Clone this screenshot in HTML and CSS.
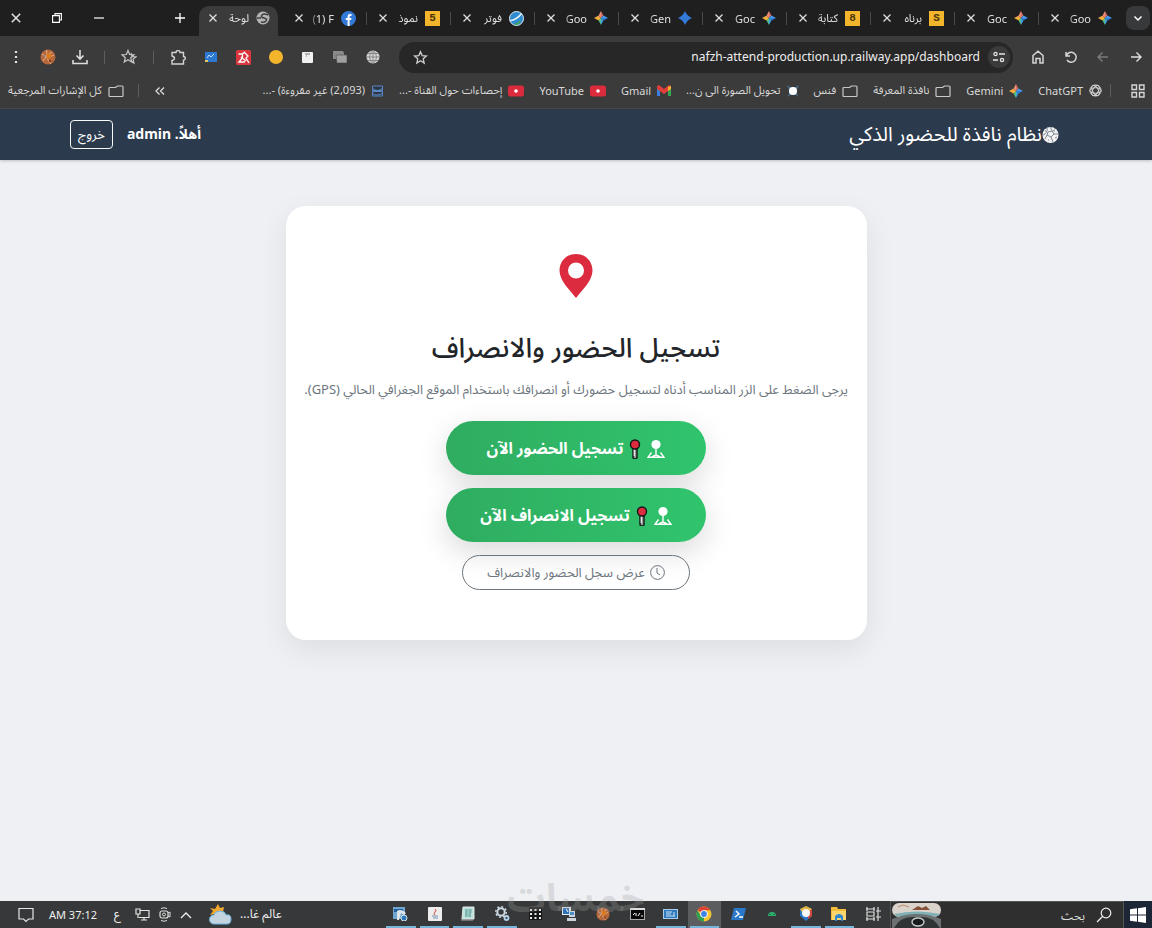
FILE: index.html
```html
<!DOCTYPE html>
<html lang="ar" dir="rtl">
<head>
    <meta charset="UTF-8">
    <meta name="viewport" content="width=device-width, initial-scale=1.0">
    <title>لوحة الحضور</title>
    <link rel="stylesheet" href="styles.css">
</head>
<body>

    <!-- shared icons -->
    <svg class="sprite" aria-hidden="true">
        <symbol id="close" viewBox="0 0 10 10"><path d="M1.5 1.5l7 7M8.5 1.5l-7 7" stroke="currentColor" stroke-width="1.3" fill="none"/></symbol>
        <symbol id="spark" viewBox="0 0 14 14">
            <path d="M7 0L4.6 4.6 7 7z" fill="#e88d78"/><path d="M7 0l2.4 4.6L7 7z" fill="#d96c62"/>
            <path d="M14 7L9.4 4.6 7 7z" fill="#4a9bea"/><path d="M14 7L9.4 9.4 7 7z" fill="#2f7de0"/>
            <path d="M7 14l2.4-4.6L7 7z" fill="#3f9de0"/><path d="M7 14L4.6 9.4 7 7z" fill="#4fc28a"/>
            <path d="M0 7l4.6 2.4L7 7z" fill="#f2b632"/><path d="M0 7l4.6-2.4L7 7z" fill="#f0a050"/>
        </symbol>
        <symbol id="folder" viewBox="0 0 16 12"><path d="M1 3.5a1 1 0 0 1 1-1h5.5L9.500 1H14a1 1 0 0 1 1 1v8.500a1 1 0 0 1-1 1H2a1 1 0 0 1-1-1z" fill="none" stroke="#c9c9c9" stroke-width="1.2"/></symbol>
        <symbol id="tube" viewBox="0 0 16 12"><rect y=".5" width="16" height="11" rx="2.500" fill="#dc2b3d"/><circle cx="8" cy="6" r="1.800" fill="#fff"/></symbol>
        <symbol id="star" viewBox="0 0 16 16"><path d="M8 1.800l1.800 4.200 4.500.4-3.400 3 1 4.500L8 11.500l-3.900 2.400 1-4.500-3.400-3 4.500-.4z" fill="none" stroke="#cfcfcf" stroke-width="1.400"/></symbol>
        <symbol id="ball" viewBox="0 0 16 16"><circle cx="8" cy="8" r="7.500" fill="#b5683b"/><path d="M2 5q6 5 12 1M3 12q4-7 9-9M7 1q-2 8 4 14" stroke="#e6b38a" fill="none"/><path d="M6 5l3-1 3 2-1 3-4 1z" fill="#dc7a20"/><circle cx="4.500" cy="7" r="1" fill="#7f86a8"/><circle cx="10" cy="12" r="1.200" fill="#8d3620"/></symbol>
        <symbol id="check-in" viewBox="0 0 18 20"><circle cx="9" cy="5.500" r="4.600" fill="#fff"/><path d="M9 9v7.500M4.500 13.500L1 18.300h16l-3.500-4.800M5 18q4-3.500 8 0" stroke="#fff" stroke-width="1.400" fill="none"/></symbol>
        <symbol id="pushpin" viewBox="0 0 12 20"><path d="M4 9.500v8.500a2 2 0 0 0 4 0V9.500z" fill="#999" stroke="#15201a" stroke-width="1.500"/><path d="M5.300 10v7" stroke="#f0eeee" stroke-width="1.200"/><circle cx="6" cy="5.500" r="4.500" fill="#dc2b3d" stroke="#151518" stroke-width="1.400"/></symbol>
    </svg>

    <nav class="tab-strip">
        <button class="tab-search" aria-label="البحث في علامات التبويب"><svg width="10" height="10" viewBox="0 0 10 10"><path d="M1.500 3.500L5 7l3.500-3.500" stroke="#fff" stroke-width="1.500" fill="none"/></svg></button>
        <div class="tabs">
            <div class="tab"><svg width="14" height="14"><use href="#spark"/></svg><span dir="auto">Goo</span><button aria-label="إغلاق"><svg width="10" height="10"><use href="#close"/></svg></button></div>
            <div class="tab"><svg width="14" height="14"><use href="#spark"/></svg><span dir="auto">Goc</span><button aria-label="إغلاق"><svg width="10" height="10"><use href="#close"/></svg></button></div>
            <div class="tab"><i class="badge">S</i><span dir="auto">برناه</span><button aria-label="إغلاق"><svg width="10" height="10"><use href="#close"/></svg></button></div>
            <div class="tab"><i class="badge">8</i><span dir="auto">كتابة</span><button aria-label="إغلاق"><svg width="10" height="10"><use href="#close"/></svg></button></div>
            <div class="tab"><svg width="14" height="14"><use href="#spark"/></svg><span dir="auto">Goc</span><button aria-label="إغلاق"><svg width="10" height="10"><use href="#close"/></svg></button></div>
            <div class="tab"><svg width="14" height="14" viewBox="0 0 14 14"><path d="M7 0q2 5 7 7-5 2-7 7-2-5-7-7 5-2 7-7z" fill="#3279d8"/></svg><span dir="auto">Gen</span><button aria-label="إغلاق"><svg width="10" height="10"><use href="#close"/></svg></button></div>
            <div class="tab"><svg width="14" height="14"><use href="#spark"/></svg><span dir="auto">Goo</span><button aria-label="إغلاق"><svg width="10" height="10"><use href="#close"/></svg></button></div>
            <div class="tab"><svg width="15" height="15" viewBox="0 0 15 15"><circle cx="7.500" cy="7.500" r="7" fill="#2f8ad0" stroke="#dceaf4"/><path d="M1 9Q7 8 12 2l1 1Q9 9 1.500 10.500z" fill="#e8f3fa"/><path d="M5 13q4-1 7-4-1 5-6 5z" fill="#45a84c"/></svg><span dir="auto">فوتر</span><button aria-label="إغلاق"><svg width="10" height="10"><use href="#close"/></svg></button></div>
            <div class="tab"><i class="badge">5</i><span dir="auto">نموذ</span><button aria-label="إغلاق"><svg width="10" height="10"><use href="#close"/></svg></button></div>
            <div class="tab"><svg width="15" height="15" viewBox="0 0 15 15"><circle cx="7.500" cy="7.500" r="7.500" fill="#3279d8"/><path d="M6.600 15V9H4.800V6.900h1.800V5.400Q6.600 3 9 3h1.500v2H9.400q-.8 0-.8.8v1.100h1.900L10.200 9H8.600v6z" fill="#fff"/></svg><span dir="ltr">(1) F</span><button aria-label="إغلاق"><svg width="10" height="10"><use href="#close"/></svg></button></div>
            <div class="tab active"><svg width="14" height="14" viewBox="0 0 14 14"><circle cx="7" cy="7" r="6.500" fill="#b4b4b4"/><path d="M12 4Q8 2 6 4T8 7q4 1 2 3t-5 1M1 7h4" stroke="#404040" stroke-width="1.500" fill="none"/></svg><span dir="auto">لوحة</span><button aria-label="إغلاق"><svg width="10" height="10"><use href="#close"/></svg></button></div>
        </div>
        <div class="window-controls">
            <button class="new-tab" aria-label="علامة تبويب جديدة"><svg width="10" height="10" viewBox="0 0 10 10"><path d="M5 0v10M0 5h10" stroke="#fff" stroke-width="1.300"/></svg></button>
            <button aria-label="تصغير"><svg width="10" height="10" viewBox="0 0 10 10"><path d="M0 5h10" stroke="#fff" stroke-width="1.200"/></svg></button>
            <button aria-label="استعادة"><svg width="10" height="10" viewBox="0 0 10 10"><path d="M.6 2.600h6.800v6.800H.6zM3 2.500V.6h6.400v6.400H7.500" stroke="#fff" stroke-width="1.100" fill="none"/></svg></button>
            <button aria-label="إغلاق النافذة"><svg width="12" height="12"><use href="#close"/></svg></button>
        </div>
    </nav>

    <div class="toolbar">
        <div class="history">
            <button aria-label="التالي"><svg width="12" height="12" viewBox="0 0 12 12"><path d="M1 6h10M6.500 1.500L11 6l-4.500 4.500" stroke="#e0e0e0" stroke-width="1.400" fill="none"/></svg></button>
            <button aria-label="السابق"><svg width="12" height="12" viewBox="0 0 12 12"><path d="M11 6H1M5.500 1.500L1 6l4.500 4.500" stroke="#7b7b7b" stroke-width="1.400" fill="none"/></svg></button>
            <button aria-label="إعادة التحميل"><svg width="14" height="14" viewBox="0 0 14 14"><path d="M2 2v4h4M2.500 5.500A5 5 0 1 1 3 10" stroke="#d6d6d6" stroke-width="1.500" fill="none"/></svg></button>
            <button aria-label="الصفحة الرئيسية"><svg width="14" height="14" viewBox="0 0 14 14"><path d="M2 5.500L7 1.200l5 4.300V13H9V8.500H5V13H2z" stroke="#d6d6d6" stroke-width="1.500" fill="none"/></svg></button>
        </div>
        <div class="omnibox">
            <button class="site-info" aria-label="معلومات الموقع"><svg width="12" height="12" viewBox="0 0 12 12"><path d="M6 3h6M0 9h5" stroke="#e6e6e6" stroke-width="1.500"/><circle cx="2.500" cy="3" r="1.600" stroke="#e6e6e6" stroke-width="1.300" fill="none"/><circle cx="9" cy="9" r="1.600" stroke="#e6e6e6" stroke-width="1.300" fill="none"/></svg></button>
            <input type="text" dir="ltr" aria-label="العنوان" value="nafzh-attend-production.up.railway.app/dashboard">
            <button aria-label="إضافة إلى الإشارات"><svg width="15" height="15"><use href="#star"/></svg></button>
        </div>
        <div class="extensions">
            <button aria-label="الترجمة"><svg width="14" height="14" viewBox="0 0 14 14"><circle cx="7" cy="7" r="6.500" fill="#d6d6d6"/><path d="M7 0v14M0 7h14M2 3.500h10M2 10.500h10M7 0Q0 7 7 14M7 0q7 7 0 14" stroke="#777" stroke-width=".8" fill="none"/></svg></button>
            <button aria-label="لقطات"><svg width="14" height="12" viewBox="0 0 14 12"><path d="M0 0h10l1 2v6H0z" fill="#8b8b8b"/><path d="M3 4h11v8H4z" fill="#a0a0a0" stroke="#555" stroke-width=".7"/></svg></button>
            <button aria-label="ملاحظات"><svg width="11" height="11" viewBox="0 0 11 11"><rect width="11" height="11" rx="1" fill="#f1f1f1"/><path d="M3 2h5M4 4h1" stroke="#777"/></svg></button>
            <button aria-label="تنبيه"><svg width="14" height="14" viewBox="0 0 14 14"><circle cx="7" cy="7" r="7" fill="#f2b52c"/></svg></button>
            <button aria-label="مدقق"><svg width="15" height="15" viewBox="0 0 15 15"><rect width="15" height="15" rx="1.500" fill="#d9363e"/><path d="M2.500 4h4l2-2M8 2l4 4-2 2 3 5M6 4q2 3-3 8h6M5 7l5 4" fill="none" stroke="#fff" stroke-width="1.300"/></svg></button>
            <button aria-label="بريد"><svg width="12" height="10" viewBox="0 0 12 10"><rect width="12" height="10" fill="#2d78d2"/><path d="M2 6l2-3 2 2 3-3" stroke="#bfe3ff" fill="none"/><path d="M0 8h3v2H0z" fill="#e0c860"/></svg></button>
            <button aria-label="الإضافات"><svg width="15" height="15" viewBox="0 0 15 15"><path d="M1 2.500h4a2 2 0 0 1 4 0h3.500v4a1.800 1.800 0 0 1 0 3.600V14H1v-3.500q2.500-.5 2.500-2.200T1 6z" fill="none" stroke="#d4d4d4" stroke-width="1.400"/></svg></button>
        </div>
        <span class="rule"></span>
        <button class="tool" aria-label="المفضلة"><svg width="16" height="16" viewBox="0 0 16 16"><path d="M7 1.500l1.600 4 4.400.3-3.300 2.900 1 4.300L7 10.800l-3.700 2.200 1-4.300L1 5.800l4.400-.3zM10 4l1 3.500 4 .3-3 2.500 1 3.700-3-2" fill="none" stroke="#c8c8c8" stroke-width="1.200"/></svg></button>
        <span class="rule"></span>
        <button class="tool" aria-label="التنزيلات"><svg width="16" height="16" viewBox="0 0 16 16"><path d="M8 1v9M4.500 6.500L8 10l3.500-3.500M1 11v3.500h14V11" stroke="#ddd" stroke-width="1.600" fill="none"/></svg></button>
        <button class="tool" aria-label="الملف الشخصي"><svg width="16" height="16"><use href="#ball"/></svg></button>
        <button class="tool" aria-label="القائمة"><svg width="4" height="14" viewBox="0 0 4 14"><path d="M2 1v2M2 6v2M2 11v2" stroke="#e2e2e2" stroke-width="2.200"/></svg></button>
    </div>

    <div class="bookmarks">
        <button class="apps" aria-label="التطبيقات"><svg width="14" height="14" viewBox="0 0 14 14"><path d="M1 1h4.500v4.500H1zM8.500 1H13v4.500H8.500zM1 8.500h4.500V13H1zM8.500 8.500H13V13H8.500z" fill="none" stroke="#d6d6d6" stroke-width="1.400"/></svg></button>
        <span class="rule"></span>
        <a href="#"><svg width="13" height="13" viewBox="0 0 14 14"><g fill="none" stroke="#d8d8d8"><circle cx="7" cy="7" r="6"/><ellipse cx="7" cy="7" rx="6" ry="3"/><ellipse cx="7" cy="7" rx="6" ry="3" transform="rotate(60 7 7)"/><ellipse cx="7" cy="7" rx="6" ry="3" transform="rotate(120 7 7)"/></g></svg><span>ChatGPT</span></a>
        <a href="#"><svg width="14" height="14"><use href="#spark"/></svg><span>Gemini</span></a>
        <a href="#"><svg width="16" height="12"><use href="#folder"/></svg><span>نافذة المعرفة</span></a>
        <a href="#"><svg width="16" height="12"><use href="#folder"/></svg><span>فنس</span></a>
        <a href="#"><svg width="12" height="12" viewBox="0 0 12 12"><path d="M0 0l3 2h6l3-2-2 4v5l2 3-3-2H3l-3 2 2-3V4z" fill="#4f7390"/><circle cx="6" cy="6" r="4" fill="#fff"/></svg><span>تحويل الصورة الى ن...</span></a>
        <a href="#"><svg width="14" height="11" viewBox="0 0 14 11"><path d="M0 1h3v10H0z" fill="#3d7fe0"/><path d="M11 1h3v10h-3z" fill="#34a853"/><path d="M0 1l2-1 5 4 5-4 2 1v3L7 9 0 4z" fill="#df3f38"/><path d="M11 2l3-1v3l-3 2z" fill="#f4b52c"/></svg><span>Gmail</span></a>
        <a href="#"><svg width="16" height="12"><use href="#tube"/></svg><span>YouTube</span></a>
        <a href="#"><svg width="16" height="12"><use href="#tube"/></svg><span>إحصاءات حول القناة -...</span></a>
        <a href="#"><svg width="13" height="12" viewBox="0 0 13 12"><path d="M1.500 1h10v4.500h-10zM1.500 6.500h10V11h-10z" fill="#2b3543" stroke="#5b86c4"/><path d="M1 3q5 5 11 0M1 8q5 4 11 0" stroke="#5b86c4" fill="none"/></svg><span>(2,093) غير مقروءة) -...</span></a>
        <button class="more" aria-label="المزيد"><svg width="10" height="8" viewBox="0 0 10 8"><path d="M4.500.5L1 4l3.500 3.500M9 .5L5.500 4 9 7.500" stroke="#ddd" stroke-width="1.300" fill="none"/></svg></button>
        <span class="rule"></span>
        <a href="#" class="all"><svg width="16" height="12"><use href="#folder"/></svg><span>كل الإشارات المرجعية</span></a>
    </div>

    <header class="navbar">
        <a href="#" class="brand"><svg width="17" height="18" viewBox="0 0 17 18"><circle cx="8.500" cy="9" r="8" fill="#f2f2f2"/><path d="M5 2q1 5-4 7M9 1q-1 4 4 4M6 6l4-1 2 3-3 3-4-2zM12 8h4M9 11l2 5M5 9l-2 4M13 12l2-1M6 14h1M3 5h1M12 3h1" stroke="#7d8792" stroke-width="1" fill="none"/></svg>نظام نافذة للحضور الذكي</a>
        <div class="user">
            <strong>أهلاً. admin</strong>
            <button class="logout">خروج</button>
        </div>
    </header>

    <main>
        <section class="card">
            <svg class="pin" width="34" height="44" viewBox="0 0 34 44"><path d="M17 0C7 0 .5 7.500.5 16.500.5 27 11 36 17 44c6-8 16.500-17 16.500-27.500C33.500 7.500 27 0 17 0zm0 8.500a8 8 0 1 1 0 16 8 8 0 0 1 0-16z" fill="#dc2b3f"/></svg>
            <h1>تسجيل الحضور والانصراف</h1>
            <p>يرجى الضغط على الزر المناسب أدناه لتسجيل حضورك أو انصرافك باستخدام الموقع الجغرافي الحالي (GPS).</p>
            <button class="action"><svg width="18" height="20"><use href="#check-in"/></svg><svg width="12" height="20"><use href="#pushpin"/></svg>تسجيل الحضور الآن</button>
            <button class="action"><svg width="18" height="20"><use href="#check-in"/></svg><svg width="12" height="20"><use href="#pushpin"/></svg>تسجيل الانصراف الآن</button>
            <button class="log"><svg width="15" height="15" viewBox="0 0 15 15"><circle cx="7.500" cy="7.500" r="6.900" fill="none" stroke="#6c757d"/><path d="M7 3v5l3 2" fill="none" stroke="#6c757d"/></svg>عرض سجل الحضور والانصراف</button>
        </section>
    </main>

    <footer class="taskbar">
        <button class="start" aria-label="ابدأ"><svg width="16" height="16" viewBox="0 0 16 16"><path d="M0 2.300L7 1.300v6.200H0zM8 1.200L16 0v7.500H8zM0 8.500h7v6.200l-7-1zM8 8.500h8V16l-8-1.200z" fill="#fff"/></svg></button>
        <label class="search">
            <svg width="16" height="16" viewBox="0 0 16 16"><circle cx="10" cy="6" r="4.800" fill="none" stroke="#eee" stroke-width="1.200"/><path d="M6.500 9.500L1 15" stroke="#eee" stroke-width="1.300"/></svg>
            <input type="text" placeholder="بحث" aria-label="بحث">
            <svg width="50" height="26" viewBox="0 0 50 26"><rect width="49" height="14" y="1" rx="7" fill="#d9d3cc"/><path d="M20 8l6-4 4 2 4-2 4 4z" fill="#875039"/><path d="M6 5l5-2 6 2" stroke="#c18a6a" fill="none"/><path d="M2 12q23-5 46 0l-2 2H4z" fill="#7fb0b4"/><path d="M0 26v-9q25-10 49 0v9z" fill="#6b7072"/><path d="M2 26Q8 15 20 15h10q12 0 18 11z" fill="#303334"/><ellipse cx="26" cy="20" rx="6" ry="4" fill="#17191a" stroke="#c5cccd" stroke-width="1.400"/></svg>
        </label>
        <div class="apps-row">
            <button aria-label="عرض المهام"><svg width="16" height="16" viewBox="0 0 16 16"><path d="M1 3h9M1 13h9M2 6h7v4H2zM13 1v14M11 5h5M11 11h5M2 1v4M9 1v4M2 11v4M9 11v4" stroke="#ddd" stroke-width="1.200" fill="none"/></svg></button>
            <button class="open" aria-label="الملفات"><svg width="16" height="14" viewBox="0 0 16 14"><path d="M0 0h6l1 2h8v11H0z" fill="#f5bb3a"/><path d="M1 4h14v9H1z" fill="#fbd66e"/><path d="M4 14V9q4-4 8 0v5h-2v-3H6v3z" fill="#2e87d0"/></svg></button>
            <button class="open" aria-label="الحماية"><svg width="14" height="15" viewBox="0 0 14 15"><path d="M1 3l6-3 6 3v7l-6 5-6-5z" fill="#2c75c4"/><path d="M1 3l6-3 6 3-2 3H3z" fill="#e4b33b"/><path d="M13 3v7l-4 3V6z" fill="#d4453a"/><circle cx="7" cy="7" r="4" fill="#f7f7f7"/></svg></button>
            <button aria-label="أندرويد"><svg width="10" height="6" viewBox="0 0 10 6"><path d="M1 5q0-4 4-4t4 4z" fill="#2eb070"/><path d="M3 3v1M7 3v1" stroke="#203b2c"/></svg></button>
            <button aria-label="الطرفية"><svg width="15" height="12" viewBox="0 0 15 12"><path d="M3 0h12l-3 12H0z" fill="#2b78c9"/><path d="M5 3l3 3-4 3M8 9h4" stroke="#fff" stroke-width="1.400" fill="none"/></svg></button>
            <button class="open current" aria-label="كروم"><svg width="16" height="16" viewBox="0 0 16 16"><circle cx="8" cy="8" r="7.500" fill="#f4c435"/><path d="M8 8L1.500 4.200A7.500 7.500 0 0 1 14.500 4.200H8z" fill="#dd4437"/><path d="M8 8v7.500A7.500 7.500 0 0 1 1.500 4.200l3.300 5.600z" fill="#2f9e55"/><circle cx="8" cy="8" r="3.800" fill="#fff"/><circle cx="8" cy="8" r="2.900" fill="#3d82e8"/></svg></button>
            <button class="open" aria-label="لوحة المفاتيح"><svg width="15" height="10" viewBox="0 0 15 10"><rect x=".5" y=".5" width="14" height="9" fill="#2e78bd" stroke="#a9cceb"/><path d="M3 3h6M3 5h5M11 3v4M3 7h9" stroke="#cbe4f7"/></svg></button>
            <button aria-label="موجه الأوامر"><svg width="15" height="12" viewBox="0 0 15 12"><rect x=".5" y=".5" width="14" height="11" fill="#090909" stroke="#aaa"/><path d="M0 1h15" stroke="#ddd" stroke-width="2"/><path d="M3 7l2-2M6 8V5M8 8l2-3M11 8h2" stroke="#fff"/></svg></button>
            <button aria-label="كرة"><svg width="14" height="14"><use href="#ball"/></svg></button>
            <button aria-label="الشبكة"><svg width="15" height="14" viewBox="0 0 15 14"><rect width="9" height="8" fill="#e7edf2"/><path d="M1 1h6v6H1z" fill="#2d72b8"/><path d="M7 4h6v6H7zM5 11h9v3H5z" fill="#ccd5dc"/><path d="M8 5h4v3H8z" fill="#4c8fca"/><path d="M4 2l2 3" stroke="#fff"/></svg></button>
            <button aria-label="الحاسبة"><svg width="13" height="13" viewBox="0 0 13 13"><rect width="13" height="13" fill="#161616"/><path d="M1 3h11M1 7h11M1 11h11" stroke="#e8e8e8" stroke-width="2" stroke-dasharray="2 2.500"/></svg></button>
            <button class="open" aria-label="الإعدادات"><svg width="15" height="15" viewBox="0 0 15 15"><circle cx="6" cy="6" r="3.700" fill="none" stroke="#cfdbe4" stroke-width="2"/><circle cx="6" cy="6" r="5.300" fill="none" stroke="#cfdbe4" stroke-width="1.400" stroke-dasharray="2 2.100"/><circle cx="11.500" cy="12" r="2" fill="none" stroke="#b3d2ea" stroke-width="1.800"/></svg></button>
            <button class="open" aria-label="المفكرة"><svg width="14" height="15" viewBox="0 0 14 15"><path d="M2 1h11v12H1z" fill="#bfe2dc" stroke="#dce8e6"/><path d="M4 4h7M4 6h7M4 8h6M4 10h6M5 3v8M9 3v8" stroke="#67aaa2"/><path d="M0 14h12" stroke="#aaa"/></svg></button>
            <button class="open" aria-label="جافا"><svg width="14" height="14" viewBox="0 0 14 14"><rect width="14" height="14" rx="1" fill="#ededed"/><path d="M7 2q2 1 0 3t0 3" stroke="#d4453a" fill="none"/><path d="M4 9h6M5 11h5" stroke="#7493b1"/></svg></button>
            <button class="open" aria-label="الأدوات"><svg width="15" height="14" viewBox="0 0 15 14"><path d="M0 0h12v12H0z" fill="#6fa5cf"/><path d="M1 2h9v3H1z" fill="#235f9b"/><path d="M4 4q4-3 9 2l-2 2-3-2-2 7H4z" fill="#dce5eb"/><circle cx="11" cy="11" r="3" fill="#2e77ba" stroke="#dce5eb"/></svg></button>
        </div>
        <div class="tray">
            <button class="weather"><span>عالم غا...</span><svg width="23" height="22" viewBox="0 0 23 22"><path d="M9 0l2 4 4-1-1 5-8 5-1-3-4 1 3-4-3-3 5 1z" fill="#f2a92f"/><path d="M5 20a4.500 4.500 0 0 1 0-9q1-4 6-4t6 4q5-1 5 4t-4 5z" fill="#c3d3df" stroke="#6db6e2"/></svg></button>
            <button aria-label="إظهار الرموز"><svg width="12" height="8" viewBox="0 0 12 8"><path d="M1 7l5-5 5 5" stroke="#eee" stroke-width="1.300" fill="none"/></svg></button>
            <button aria-label="الكاميرا"><svg width="12" height="15" viewBox="0 0 12 15"><rect x="1" y="4" width="8" height="7" rx="2" fill="none" stroke="#ddd" stroke-width="1.200"/><circle cx="5" cy="7.500" r="1.500" fill="none" stroke="#ddd"/><path d="M9 6l2-1v5L9 9M2 1.500q3-1.500 6 0M2 13.500q3 1.500 6 0" stroke="#ddd" fill="none"/></svg></button>
            <button aria-label="الشبكة"><svg width="15" height="13" viewBox="0 0 15 13"><path d="M4 2.500h10v7H4M9 10v2M6 12h6" stroke="#e6e6e6" stroke-width="1.200" fill="none"/><path d="M1 1h4v5H1zM3 6v4" stroke="#e6e6e6" stroke-width="1.200" fill="#333"/></svg></button>
            <button class="lang">ع</button>
            <time dir="ltr">AM 37:12</time>
            <button aria-label="الإشعارات"><svg width="16" height="16" viewBox="0 0 16 16"><path d="M1 1.500h14v10.500H10.500L8 14.500 5.500 12H1z" stroke="#e6e6e6" stroke-width="1.200" fill="none"/></svg></button>
        </div>
    </footer>

    <div class="watermark">خمسات</div>

</body>
</html>
```
FILE: styles.css
```css
* {
    box-sizing: border-box;
}

body {
    font-family: "Noto Sans", "Noto Sans Arabic", "DejaVu Sans", sans-serif;
    background-color: #eef0f4;
    color: #212529;
    margin: 0;
    min-height: 100vh;
    display: flex;
    flex-direction: column;
    position: relative;
}

button {
    font-family: inherit;
    background: none;
    border: none;
    color: inherit;
    padding: 0;
    display: flex;
    align-items: center;
    justify-content: center;
    cursor: pointer;
}

svg {
    flex-shrink: 0;
}

a {
    color: inherit;
    text-decoration: none;
}

.sprite {
    display: none;
}

/* browser tabs */
.tab-strip {
    display: flex;
    height: 36px;
    background-color: #1f1f1f;
    color: #e0e0e0;
    padding-right: 2px;
}

.tab-search {
    width: 24px;
    height: 24px;
    margin: 6px 0 0 4px;
    border-radius: 8px;
    background-color: #38393a;
    flex-shrink: 0;
}

.tabs {
    flex: 1;
    min-width: 0;
    display: flex;
}

.tab {
    flex: 1 1 0;
    min-width: 0;
    display: flex;
    align-items: center;
    padding: 0 10px 0 12px;
    position: relative;
    font-size: 11px;
    white-space: nowrap;
}

.tab span {
    width: 26px;
    margin: 0 7px 0 6px;
    overflow: hidden;
    text-align: right;
    mask-image: linear-gradient(to left, #000 70%, transparent);
}

.tab::after {
    content: "";
    position: absolute;
    left: 0;
    top: 12px;
    height: 13px;
    border-left: 1px solid #4a4a4a;
}

.tab.active::after,
.tab:nth-last-child(2)::after {
    display: none;
}

.tab.active {
    background-color: #3b3b3b;
    margin: 6px 4px 0 5px;
    padding: 0 8px 6px 9px;
    border-radius: 10px 10px 0 0;
}

.badge {
    width: 15px;
    height: 15px;
    background-color: #f2b52c;
    color: #4b3509;
    font: bold 11px/15px "Liberation Mono", monospace;
    text-align: center;
    flex-shrink: 0;
}

.window-controls {
    width: 194px;
    display: flex;
    flex-shrink: 0;
}

.window-controls button {
    width: 42px;
}

.window-controls .new-tab {
    width: 28px;
    margin-left: 46px;
}

.window-controls button:last-child {
    width: 36px;
    padding-right: 4px;
}

/* address bar */
.toolbar {
    display: flex;
    align-items: center;
    height: 42px;
    background-color: #3b3b3b;
}

.history {
    display: flex;
    width: 130px;
}

.history button,
.extensions button {
    flex: 1;
    height: 32px;
}

.omnibox {
    flex: 1;
    display: flex;
    align-items: center;
    height: 31px;
    margin: 0 9px 0 10px;
    padding: 0 3px 0 14px;
    border-radius: 16px;
    background-color: #272727;
}

.omnibox input {
    flex: 1;
    min-width: 0;
    border: none;
    background: none;
    color: #eee;
    font: 12px/20px "Noto Sans", sans-serif;
    text-align: right;
    padding: 0 8px;
}

.site-info {
    width: 22px;
    height: 22px;
    border-radius: 50%;
    background-color: #3b3b3b;
}

.extensions {
    display: flex;
    width: 227px;
}

.tool {
    width: 32px;
    height: 32px;
}

.rule {
    width: 1px;
    height: 13px;
    margin: 0 8px;
    background-color: #5e5e5e;
}

/* bookmarks */
.bookmarks {
    display: flex;
    align-items: center;
    height: 31px;
    padding: 0 7px 5px 8px;
    background-color: #3b3b3b;
    border-bottom: 1px solid #4a4a4a;
    color: #d8d8d8;
    font-size: 11px;
    white-space: nowrap;
}

.bookmarks a {
    display: flex;
    align-items: center;
    gap: 6px;
    margin-left: 15px;
}

.apps {
    margin-left: 12px;
}

.bookmarks .more {
    margin-right: auto;
    margin-left: 8px;
}

.bookmarks .all {
    margin: 0 6px 0 0;
}

/* site header */
.navbar {
    display: flex;
    align-items: center;
    justify-content: space-between;
    height: 51px;
    padding: 0 93px 0 70px;
    background-color: #2b3a4c;
    color: #fff;
    box-shadow: 0 1px 3px rgba(0, 0, 0, 0.2);
}

.brand {
    display: flex;
    align-items: center;
    font-size: 20px;
}

.user {
    display: flex;
    align-items: center;
    gap: 14px;
    font-size: 14px;
}

.logout {
    height: 29px;
    padding: 0 7px;
    border: 1px solid #f8f9fa;
    border-radius: 4px;
    font-size: 13px;
}

main {
    flex: 1;
    padding: 46px 20px;
}

.card {
    display: flex;
    flex-direction: column;
    align-items: center;
    max-width: 581px;
    margin: 0 auto;
    padding: 48px 16px 50px;
    border-radius: 20px;
    background-color: #fff;
    box-shadow: 0 10px 30px rgba(0, 0, 0, 0.08);
}

.card h1 {
    margin: 28px 0 0;
    font-size: 27px;
    font-weight: 500;
    line-height: 42px;
    white-space: nowrap;
}

.card p {
    margin: 10px 0 20px;
    color: #6c757d;
    font-size: 13px;
    line-height: 23px;
}

.action {
    gap: 6px;
    width: 260px;
    height: 54px;
    margin-bottom: 13px;
    padding-top: 2px;
    border-radius: 27px;
    background: linear-gradient(90deg, #2fac60, #30c46d);
    box-shadow: 0 10px 30px rgba(0, 0, 0, 0.15);
    color: #fff;
    font-size: 16px;
    font-weight: bold;
}

.log {
    gap: 5px;
    width: 228px;
    height: 35px;
    border: 1px solid #6c757d;
    border-radius: 18px;
    color: #6c757d;
    font-size: 13px;
}

/* windows taskbar */
.taskbar {
    display: flex;
    height: 27px;
    background-color: #373839;
    color: #f0f0f0;
    font-size: 12px;
}

.start {
    width: 28px;
    background-color: #1c2636;
}

.search {
    display: flex;
    align-items: center;
    width: 234px;
    padding: 0 11px 0 1px;
    border: 1px solid #555;
    border-bottom-width: 0;
    background-color: #2f2f2f;
}

.search input {
    flex: 1;
    min-width: 0;
    border: none;
    background: none;
    font: 12px "Noto Sans", "Noto Sans Arabic", "DejaVu Sans", sans-serif;
    color: #ddd;
    padding: 0 11px;
}

.search input::placeholder {
    color: #ddd;
}

.apps-row {
    display: flex;
    width: 506px;
}

.apps-row button {
    flex: 1;
    border-bottom: 2px solid transparent;
}

.apps-row .open {
    border-image: linear-gradient(90deg, transparent 12%, #76b5dc 12%, #76b5dc 88%, transparent 88%) 2;
}

.apps-row .current {
    background-color: #5b5d5f;
}

.tray {
    flex: 1;
    display: flex;
    align-items: center;
    justify-content: flex-end;
    gap: 9px;
    padding-left: 18px;
}

.weather {
    gap: 8px;
    margin-left: 8px;
    font-size: 12px;
}

.lang {
    width: 14px;
    margin: 0 2px 0 4px;
    font-size: 12px;
}

.tray time {
    font-size: 11px;
    margin-left: 6px;
}

.watermark {
    position: absolute;
    left: 507px;
    bottom: 12px;
    color: rgba(160, 160, 160, 0.3);
    font-size: 38px;
    font-weight: bold;
    line-height: 40px;
    pointer-events: none;
}
```
